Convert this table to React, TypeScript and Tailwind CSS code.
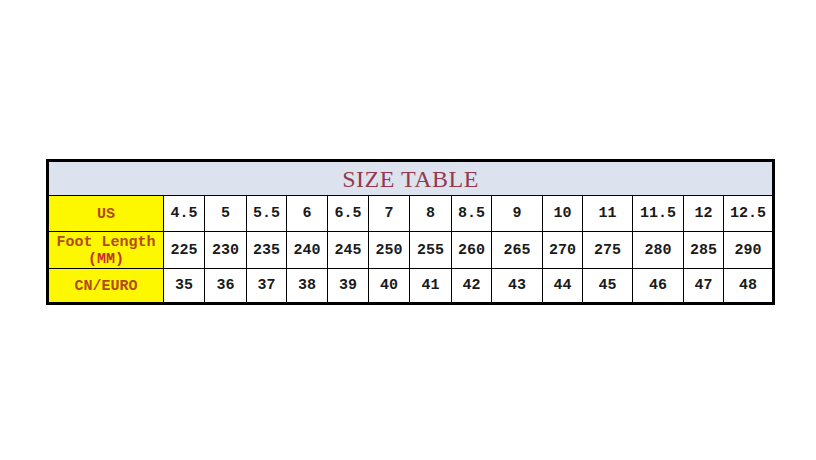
const widths = [115, 41, 42, 40, 41, 41, 41, 42, 40, 51, 40, 50, 51, 40, 48];

const rows = [
  { label: "US", cells: ["4.5", "5", "5.5", "6", "6.5", "7", "8", "8.5", "9", "10", "11", "11.5", "12", "12.5"], h: "h-[36px]" },
  { label: "foot", cells: ["225", "230", "235", "240", "245", "250", "255", "260", "265", "270", "275", "280", "285", "290"], h: "h-[37px]" },
  { label: "CN/EURO", cells: ["35", "36", "37", "38", "39", "40", "41", "42", "43", "44", "45", "46", "47", "48"], h: "h-[34px]" },
];

const mono = { fontFamily: '"Liberation Mono", "DejaVu Sans Mono", monospace' };

export default function App() {
  return (
    <div className="w-[816px] h-[460px] bg-white pt-[159px] pl-[46px]">
      <div className="w-[729px] border-[3px] border-black" style={mono}>
        <div
          className="h-[33px] bg-[#dce3ee] flex items-center justify-center text-[24px] leading-none text-[#93394f] pt-[1px] tracking-[0.5px]"
          style={{ fontFamily: '"Liberation Serif", "DejaVu Serif", serif' }}
        >
          SIZE TABLE
        </div>
        {rows.map((row) => (
          <div key={row.label} className={`flex border-t border-black ${row.h}`}>
            <div
              className="w-[115px] shrink-0 bg-[#fdf700] border-r border-black flex flex-col items-center justify-center pt-[2px] font-bold text-[#b24a20] text-[15px] leading-[17px]"
            >
              {row.label === "foot" ? (
                <>
                  <span>Foot Length</span>
                  <span className="text-[#c2302a]">(MM)</span>
                </>
              ) : (
                <span>{row.label}</span>
              )}
            </div>
            {row.cells.map((c, i) => (
              <div
                key={i}
                className={`shrink-0 flex items-center justify-center pt-[2px] font-bold text-[15px] text-[#1a1a1a] ${i < row.cells.length - 1 ? "border-r border-black" : ""}`}
                style={{ width: widths[i + 1] }}
              >
                {c}
              </div>
            ))}
          </div>
        ))}
      </div>
    </div>
  );
}
